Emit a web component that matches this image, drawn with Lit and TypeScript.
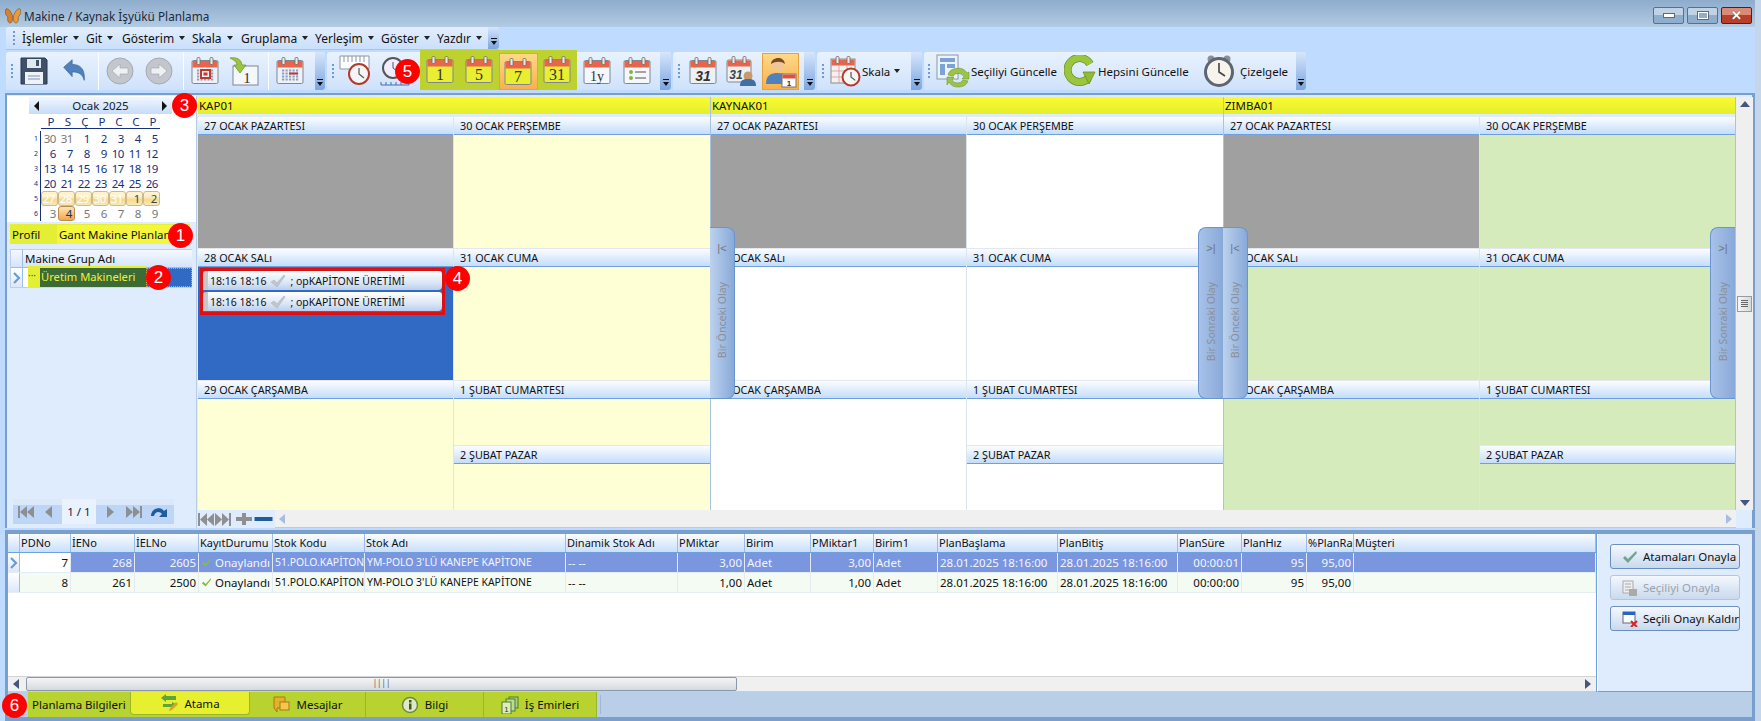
import { LitElement, html, css, svg } from "lit";
import { customElement } from "lit/decorators.js";

const ring = (x: number) => svg`<rect x=${x} y="1.5" width="3" height="7" rx="1" fill="#e8e8e8" stroke="#7a6a60" stroke-width=".8"/>`;
const cal = (body: string, inner: unknown, head = "#e8654c") => html`<svg class="ic" viewBox="0 0 30 30" width="30" height="30">
  <rect x="2" y="4.5" width="26" height="23" rx="1.5" fill=${body} stroke="#7d8794"/>
  <rect x="2.5" y="5" width="25" height="6.5" fill=${head}/>${ring(7)}${ring(20)}${inner}</svg>`;
const num = (t: string, s = 16, fam = "Liberation Serif", weight = "400", st = "normal") =>
  svg`<text x="15" y="25" text-anchor="middle" font-family=${fam} font-size=${s} font-weight=${weight} font-style=${st} fill="#333">${t}</text>`;
const dotGrid = svg`<g fill="#8d9fc0">${[0, 1, 2, 3].map(r => [0, 1, 2, 3, 4].map(c => svg`<rect x=${7 + c * 3.5} y=${13.5 + r * 3} width="2.2" height="2"/>`))}</g>`;
const clock = (cx: number, cy: number, r: number) => svg`<circle cx=${cx} cy=${cy} r=${r} fill="#f6f6f6" stroke="#b53a2e" stroke-width="2"/><path d="M${cx} ${cy - r * .6}V${cy}L${cx + r * .5} ${cy + r * .4}" stroke="#555" stroke-width="1.2" fill="none"/>`;
const ruler = svg`<path d="M1 1h29v13H1z" fill="#fff" stroke="#8a97a8"/><path d="M5 1v6M9 1v6M13 1v6M17 1v6M21 1v6M25 1v6" stroke="#8a97a8"/>`;
const icons = {
  save: html`<svg class="ic" viewBox="0 0 30 30" width="30" height="30"><path d="M2 2h24l2 2v24H2z" fill="#3f5068" stroke="#28384e"/><rect x="8" y="3" width="14" height="9" fill="#dfe7f0"/><rect x="17" y="4" width="3" height="6" fill="#3f5068"/><rect x="6" y="16" width="18" height="12" fill="#eef3f8"/><path d="M9 20h12M9 23h12" stroke="#7d93b5"/></svg>`,
  undo: html`<svg class="ic" viewBox="0 0 30 30" width="28" height="28"><path d="M4 11l9-8v5c8 0 14 4 13 17-2-7-6-9-13-9v5z" fill="#4f81bd" stroke="#3c6aa3" stroke-width=".8"/></svg>`,
  back: html`<svg class="ic" viewBox="0 0 30 30" width="30" height="30"><circle cx="15" cy="15" r="13" fill="#c3c6cc" stroke="#a5a9b0"/><path d="M7 15l8-7v4h8v6h-8v4z" fill="#eef0f3" stroke="#a0a4aa" stroke-width=".6"/></svg>`,
  fwd: html`<svg class="ic" viewBox="0 0 30 30" width="30" height="30"><circle cx="15" cy="15" r="13" fill="#c3c6cc" stroke="#a5a9b0"/><path d="M23 15l-8-7v4H7v6h8v4z" fill="#eef0f3" stroke="#a0a4aa" stroke-width=".6"/></svg>`,
  cal1: cal("#eef2f8", svg`${dotGrid}<rect x="11" y="14" width="9" height="8" fill="#eef2f8" stroke="#c0392b" stroke-width="2"/><rect x="13.500" y="16.500" width="4" height="3" fill="#c0392b"/>`),
  goto1: html`<svg class="ic" viewBox="0 0 30 30" width="30" height="30"><rect x="4" y="10" width="25" height="19" fill="#f4f7fb" stroke="#7d8794"/><path d="M1 2c7-1 11 1 12 7h4l-6 8-6-8h3c0-3-3-5-7-7z" fill="#9bc53d" stroke="#6b8f22" stroke-width=".7"/><text x="18" y="27" font-family="Liberation Serif" font-size="15" text-anchor="middle" fill="#333">1</text></svg>`,
  cal2: cal("#eef2f8", svg`${dotGrid}<rect x="14" y="16.5" width="9" height="2" fill="#c0392b"/>`),
  rclock: html`<svg class="ic" viewBox="0 0 32 32" width="32" height="32">${ruler}${clock(20, 19, 10)}</svg>`,
  sclock: html`<svg class="ic" viewBox="0 0 32 32" width="32" height="32"><circle cx="13" cy="13" r="10" fill="#eef" stroke="#555" stroke-width="2"/><path d="M13 7v6l4 3" stroke="#555" fill="none"/><path d="M1 27v3h28v-3M6 27v3M11 27v3M16 27v3M21 27v3" stroke="#3e6fb0" fill="none"/></svg>`,
  y1: cal("#e9ef30", num("1")),
  y5: cal("#e9ef30", num("5")),
  y7: cal("#e9ef30", num("7")),
  y31: cal("#e9ef30", num("31")),
  yy: cal("#f4f7fb", num("1y", 14)),
  list: cal("#f4f7fb", svg`<circle cx="9" cy="16" r="2" fill="#8ab33c"/><circle cx="9" cy="22" r="2" fill="#8ab33c"/><path d="M13 16h11M13 22h11" stroke="#555" stroke-width="1.2"/>`),
  c31: cal("#eef1f4", num("31", 14, "Liberation Sans", "700", "italic")),
  c31t: html`<svg class="ic" viewBox="0 0 32 32" width="32" height="32"><rect x="2" y="5" width="24" height="22" rx="1.5" fill="#eef1f4" stroke="#7d8794"/><rect x="2.5" y="5.5" width="23" height="6" fill="#e8654c"/>${ring(7)}${ring(18)}<text x="11" y="24" font-family="Liberation Sans" font-size="12" font-weight="700" font-style="italic" fill="#444" text-anchor="middle">31</text><circle cx="23" cy="21" r="4.5" fill="#c89a6a"/><path d="M15 31c0-6 3-7 8-7s8 1 8 7z" fill="#3f6ea8"/></svg>`,
  person: html`<svg class="ic" viewBox="0 0 32 32" width="32" height="32"><circle cx="13" cy="9" r="6.5" fill="#f1c596"/><path d="M6 8c0-7 13-9 14 0-4-3-9-3-14 0z" fill="#7a4a22"/><path d="M1 28c0-9 5-11 12-11s9 3 9 5v6z" fill="#4f81bd"/><rect x="17" y="18" width="14" height="13" fill="#fff" stroke="#777"/><rect x="17.5" y="18.5" width="13" height="4" fill="#e0503c"/><text x="24" y="30" font-family="Liberation Sans" font-size="8" font-weight="700" text-anchor="middle" fill="#333">1</text></svg>`,
  skala: html`<svg class="ic" viewBox="0 0 32 32" width="32" height="32"><rect x="2" y="4" width="24" height="24" fill="#f4f1ee" stroke="#8b8b8b"/><rect x="2.5" y="4.5" width="23" height="6" fill="#e8654c"/>${ring(7)}${ring(18)}<path d="M2 16h24M2 22h24M10 10v18M18 10v18" stroke="#d88" stroke-width=".7"/>${clock(22, 22, 8.5)}</svg>`,
  upd1: html`<svg class="ic" viewBox="0 0 34 34" width="34" height="34"><rect x="1" y="1" width="21" height="24" fill="#eef3fa" stroke="#8a97a8"/><rect x="4" y="4" width="15" height="4" fill="#7ba3d6"/><rect x="4" y="10" width="5" height="11" fill="#7ba3d6"/><rect x="11" y="10" width="8" height="4" fill="#7ba3d6"/><path d="M12 21a10 8 0 0 1 19-2l2-1v7h-7l2-2a6 5 0 0 0-11-1zM32 27a10 8 0 0 1-19 1l-2 3v-8h7l-2 3a6 5 0 0 0 11 0z" fill="#9ac34a" stroke="#6f9a2a" stroke-width=".6"/></svg>`,
  upd2: html`<svg class="ic" viewBox="0 0 32 32" width="32" height="32"><path d="M24.500 23A12 12 0 1 1 26 9" fill="none" stroke="#6b8f22" stroke-width="8"/><path d="M24.500 23A12 12 0 1 1 26 9" fill="none" stroke="#9ac53f" stroke-width="6.500"/><path d="M19 17h12l-6 12z" fill="#8fbc35" stroke="#6b8f22" stroke-width=".8"/></svg>`,
  cizelge: html`<svg class="ic" viewBox="0 0 34 34" width="34" height="34"><circle cx="9" cy="5" r="3.500" fill="#8a8f96"/><circle cx="25" cy="5" r="3.500" fill="#8a8f96"/><circle cx="17" cy="18" r="13.500" fill="#f6f4ec" stroke="#5c6570" stroke-width="3"/><path d="M17 9v9l6 4" stroke="#444" stroke-width="1.600" fill="none"/></svg>`,
  butterfly: html`<svg viewBox="0 0 16 16" width="16" height="16"><path d="M7.500 8C6 3 3 0 1 1c-2 2 0 7 2 8-1 2 0 6 2 6s3-3 2.500-7z" fill="#d9822b" stroke="#6b3a10" stroke-width=".5"/><path d="M8.500 8c1.500-5 4.500-8 6.500-7 2 2 0 7-2 8 1 2 0 6-2 6s-3-3-2.500-7z" fill="#e79c3c" stroke="#6b3a10" stroke-width=".5"/></svg>`,
  check: html`<svg viewBox="0 0 16 14" width="16" height="14"><path d="M1 8l3-2 3 3 7-8 1 1-8 11z" fill="#c2c6cc" stroke="#a9adb3" stroke-width=".5"/></svg>`,
  ok: html`<svg viewBox="0 0 14 12" width="13" height="11"><path d="M1 7l2-2 3 3 6-7 1 1-7 9z" fill="#8dbb3a"/></svg>`,
  okBtn: html`<svg viewBox="0 0 16 14" width="16" height="14"><path d="M1 8l2-2 3 3 8-8 1 2-9 10z" fill="#6fa58c"/></svg>`,
  sel: html`<svg viewBox="0 0 16 16" width="16" height="16"><rect x="1" y="1" width="10" height="12" fill="#eee" stroke="#aaa"/><path d="M3 4h6M3 7h6M3 10h4" stroke="#aaa"/><rect x="7" y="9" width="8" height="7" fill="#aaa"/></svg>`,
  unsel: html`<svg viewBox="0 0 16 16" width="16" height="16"><rect x="1" y="1" width="12" height="11" fill="#fff" stroke="#666"/><rect x="1" y="1" width="12" height="3" fill="#2563c4"/><path d="M9 10l6 6M15 10l-6 6" stroke="#d8232a" stroke-width="2"/></svg>`,
  atama: html`<svg viewBox="0 0 18 18" width="18" height="18"><path d="M1 4l5-4v2h10v4H6v2zM17 11l-5-3v2H3v3h9v2z" fill="#5aa63a"/><path d="M9 17l1-3 6-6 2 2-6 6z" fill="#d9a22c"/></svg>`,
  msg: html`<svg viewBox="0 0 18 18" width="18" height="18"><path d="M2 1h11v11H5v4l-3-4z" fill="#e3b12c" stroke="#a87b12"/><rect x="8" y="6" width="9" height="8" fill="#f2c84c" stroke="#a87b12"/></svg>`,
  info: html`<svg viewBox="0 0 18 18" width="18" height="18"><circle cx="9" cy="9" r="7.500" fill="#dfe8c8" stroke="#6f8a3a" stroke-width="1.500"/><rect x="8" y="7.500" width="2.500" height="6" fill="#3c5a1e"/><rect x="8" y="4" width="2.500" height="2.500" fill="#3c5a1e"/></svg>`,
  orders: html`<svg viewBox="0 0 18 18" width="18" height="18"><rect x="8" y="1" width="9" height="11" fill="#a8d080" stroke="#4f7a2a"/><rect x="5" y="3" width="9" height="12" fill="#bcdc94" stroke="#4f7a2a"/><rect x="1" y="6" width="9" height="12" fill="#d8efbc" stroke="#4f7a2a"/><text x="5.500" y="16" font-family="Liberation Sans" font-size="8" text-anchor="middle" fill="#333">1</text></svg>`,
  chevR: html`<svg viewBox="0 0 8 12" width="8" height="12"><path d="M1 1l5 5-5 5" fill="none" stroke="#6b9bd8" stroke-width="2.200"/></svg>`,
};
const grip = html`<span class="grip"><i></i><i></i><i></i><i></i></span>`;
const chev = html`<span class="chev"><b></b><em></em></span>`;
const sep = html`<span class="sep"></span>`;
const gap = html`<span></span>`;
const tb = (i: unknown, c = "") => html`<span class="tb ${c}">${i}</span>`;

const weeks: [string, string[]][] = [
  ["1", ["30", "31", "1", "2", "3", "4", "5"]],
  ["2", ["6", "7", "8", "9", "10", "11", "12"]],
  ["3", ["13", "14", "15", "16", "17", "18", "19"]],
  ["4", ["20", "21", "22", "23", "24", "25", "26"]],
  ["5", ["27", "28", "29", "30", "31", "1", "2"]],
  ["6", ["3", "4", "5", "6", "7", "8", "9"]],
];
const dayClass = (w: number, i: number) => {
  if (w === 0 && i < 2) return "out";
  if (w === 4) return i < 5 ? "hl" : "hl hlo";
  if (w === 5) return i === 1 ? "sel" : "out";
  return "";
};

const cols = ["PDNo", "İENo", "İELNo", "KayıtDurumu", "Stok Kodu", "Stok Adı", "Dinamik Stok Adı", "PMiktar", "Birim", "PMiktar1", "Birim1", "PlanBaşlama", "PlanBitiş", "PlanSüre", "PlanHız", "%PlanRa", "Müşteri"];
const rows = [
  ["7", "268", "2605", "Onaylandı", "51.POLO.KAPİTONE", "YM-POLO 3'LÜ KANEPE KAPİTONE", "-- --", "3,00", "Adet", "3,00", "Adet", "28.01.2025 18:16:00", "28.01.2025 18:16:00", "00:00:01", "95", "95,00", ""],
  ["8", "261", "2500", "Onaylandı", "51.POLO.KAPİTONE", "YM-POLO 3'LÜ KANEPE KAPİTONE", "-- --", "1,00", "Adet", "1,00", "Adet", "28.01.2025 18:16:00", "28.01.2025 18:16:00", "00:00:00", "95", "95,00", ""],
];
const rightCols = new Set([0, 1, 2, 7, 9, 13, 14, 15]);
const tightCols = new Set([4, 5]);
const cellClass = (i: number) => `${rightCols.has(i) ? "rgt" : ""} ${tightCols.has(i) ? "tight" : ""}`;

const resources = [
  { name: "KAP01", a: "cream", ev: true, prev: false, next: false },
  { name: "KAYNAK01", a: "white", ev: false, prev: true, next: true },
  { name: "ZIMBA01", a: "green", ev: false, prev: true, next: true },
];

@customElement("app-root")
export class AppRoot extends LitElement {
  static styles = css`
    :host { display: block; position: relative; width: 1761px; height: 721px; overflow: hidden; background: #c4d6ea; font-family: "Noto Sans", "DejaVu Sans", sans-serif; font-size: 11px; color: #111; }
    .win { width: 1755px; height: 721px; background: #bfdbff; display: flex; flex-direction: column; }
    .title { height: 27px; flex: none; box-sizing: border-box; padding: 4px 0 0 5px; background: linear-gradient(#8eaccc, #b3cbe3); display: flex; align-items: center; gap: 3px; font-size: 11.8px; color: #1d2a3a; }
    .title .spacer { flex: 1; }
    .wbtns { display: flex; gap: 3px; padding-right: 3px; }
    .wb { width: 31px; height: 17px; box-sizing: border-box; border: 1px solid #5b6f8a; border-radius: 2px; background: linear-gradient(#c0d2e6 50%, #8fadcc 50%); display: flex; align-items: center; justify-content: center; }
    .wb.min i { width: 10px; height: 3px; background: #fff; border: 1px solid #667; }
    .wb.max i { width: 8px; height: 5px; border: 2px solid #fff; outline: 1px solid #667; outline-offset: -1px; background: #8fadcc; }
    .wb.close { background: linear-gradient(#dc8a78 50%, #b8402a 50%); border-color: #5c1a1a; color: #fff; font: 700 13px/1 "Liberation Sans", sans-serif; text-shadow: 0 0 1px #333; }

    .menurow { height: 25px; flex: none; display: flex; padding-left: 6px; }
    .menu { width: 493px; height: 23px; display: grid; grid-template-columns: 16px 64px 36px 70px 49px 74px 66px 56px 51px 11px; align-items: center; background: linear-gradient(#e3eefd, #c9dffb); border-bottom: 1px solid #a9c6ea; border-radius: 3px 3px 0 0; box-sizing: border-box; font-size: 12px; }
    .mi { display: inline-flex; align-items: center; gap: 5px; }
    .mi::after { content: ""; border: 3px solid transparent; border-top: 4px solid #222; margin-top: 3px; }
    .grip { display: flex; flex-direction: column; gap: 2px; width: 100%; align-items: center; justify-content: center; height: 100%; }
    .grip i { width: 2px; height: 2px; background: #6e9bd6; }
    .chev { height: 100%; width: 100%; background: linear-gradient(#d6e6fb, #7ba6e0); display: flex; flex-direction: column; align-items: center; justify-content: flex-end; padding-bottom: 4px; box-sizing: border-box; border-radius: 0 3px 3px 0; }
    .chev b { width: 6px; height: 1px; background: #111; margin-bottom: 2px; }
    .chev em { border: 3px solid transparent; border-top: 4px solid #111; border-bottom: 0; }

    .toolrow { height: 38px; flex: none; display: flex; padding-left: 6px; gap: 2px; }
    .grp { height: 38px; display: grid; align-items: stretch; background: linear-gradient(#e9f2fe, #cfe2fb); border-radius: 3px 3px 0 0; }
    .ga { width: 319px; grid-template-columns: 12px 32px 48px 2px 40px 38px 5px 2px 40px 38px 5px 2px 40px 5px 10px; }
    .gb { width: 344px; grid-template-columns: 11px 34px 48px 157px 40px 39px 4px 11px; }
    .gc { width: 142px; grid-template-columns: 12px 35px 42px 37px 5px 11px; }
    .gd { width: 105px; grid-template-columns: 11px 34px 43px 6px 11px; }
    .ge { width: 382px; grid-template-columns: 10px 37px 91px 36px 95px 5px 42px 56px 10px; }
    .tb { display: flex; align-items: center; justify-content: center; }
    .tb.on { background: linear-gradient(#ffd98a, #f8b04a); outline: 1px solid #e8a23a; outline-offset: -1px; margin-top: 1px; }
    .yel .tb.on { margin-top: 3px; }
    .tb.txt { font-size: 11.5px; justify-content: flex-start; white-space: nowrap; gap: 4px; }
    .tb.drop::after { content: ""; border: 3px solid transparent; border-top: 4px solid #222; margin-top: 3px; }
    .sep { background: linear-gradient(#f8fbff, #ffffff); width: 1px; }
    .yel { display: grid; grid-template-columns: repeat(4, 1fr); background: #bdd22f; margin-top: -2px; height: 40px; }
    .ic { display: block; }

    .main { height: 435px; flex: none; margin: 3px 0 0 5px; border: 2px solid #7a9fce; border-width: 2px 3px 0 2px; display: flex; box-sizing: border-box; background: #dfecfd; }
    .left { width: 189px; flex: none; display: flex; flex-direction: column; border-right: 1px solid #b8cce6; margin-top: 1px; }
    .calbox { height: 126px; flex: none; background: #fff; box-sizing: border-box; padding: 1px 0 0 22px; }
    .calhead { width: 143px; height: 17px; background: linear-gradient(#f1f7ff, #c6dcf8); display: flex; align-items: center; justify-content: space-between; padding: 0 5px; box-sizing: border-box; font-size: 11.5px; color: #123; }
    .arr { border: 4px solid transparent; border-width: 5px 5px; }
    .arr.l { border-right-color: #111; border-left: 0; }
    .arr.r { border-left-color: #111; border-right: 0; }
    .calgrid { display: grid; grid-template-columns: 13px repeat(7, 17px); grid-template-rows: 17px repeat(6, 15px); margin-left: -1px; color: #15317e; font-size: 11.5px; line-height: 15px; letter-spacing: -0.4px; }
    .calgrid > span { text-align: right; padding-right: 2px; box-sizing: border-box; }
    .calgrid .dn { height: 15px; border-bottom: 1px solid #15317e; text-align: center; padding: 0 0 0 3px; letter-spacing: 0; }
    .calgrid .wk { font-size: 7px; color: #15317e; border-right: 1px solid #15317e; padding-right: 2px; letter-spacing: 0; }
    .calgrid .wk0 { padding: 0; }
    .out { color: #777; }
    .hl { background: linear-gradient(#fff3cf 30%, #f5d98e 60%, #fbeab8); border: 1px solid #cdb98a; border-radius: 3px; color: #fff; line-height: 13px; }
    .hlo { color: #444; }
    .sel { background: linear-gradient(#fde4b0, #f4a64a); border: 1px solid #b98d52; border-radius: 3px; line-height: 13px; }

    .prof { margin: 2px 6px 0 3px; height: 20px; background: #e3ee35; display: flex; align-items: center; padding-left: 2px; font-size: 11.5px; flex: none; }
    .prof .lb1 { width: 45px; flex: none; }
    .prof .v { flex: 1; height: 19px; background: #f3f63c; white-space: nowrap; overflow: hidden; padding-left: 2px; line-height: 19px; }
    .tree { margin: 5px 0 0 3px; flex: none; background: #fff; border: 1px solid #bcd0ea; border-right: 0; width: 182px; box-sizing: border-box; }
    .trh { display: grid; grid-template-columns: 12px 1fr; height: 18px; background: linear-gradient(#f5f9ff, #d3e4fb); border-bottom: 1px solid #9dbce6; box-sizing: border-box; line-height: 18px; font-size: 11.5px; }
    .trh span:first-child { border-right: 1px solid #9dbce6; }
    .trh span:last-child { padding-left: 2px; }
    .trr { display: grid; grid-template-columns: 12px 5px 12px 106px 1fr; height: 19px; line-height: 18px; }
    .trr .s { background: linear-gradient(#fff, #dce8f8); border-right: 1px solid #9dbce6; padding-left: 2px; box-sizing: border-box; display: flex; align-items: center; }
    .trr .y { background: #e3ee35; color: #555; font-size: 10px; line-height: 14px; box-shadow: 0 -2px 0 #e3ee35, 0 1px 0 #e3ee35; }
    .trr .d { background: #3d6b35; color: #eef23a; white-space: nowrap; font-size: 11.2px; box-shadow: 0 -2px 0 #e3ee35, 0 1px 0 #e3ee35; padding-left: 1px; }
    .trr .bl { background: #316ac5; border: 1px dotted #d8a84a; box-sizing: border-box; }
    .lspace { flex: 1; }
    .pager { display: grid; grid-template-columns: 49px 34px 78px; margin: 0 0 4px 6px; height: 25px; flex: none; align-items: stretch; }
    .pg { background: linear-gradient(#dbe8fa 25%, #bdd6f7 25%); display: flex; align-items: center; justify-content: space-around; padding: 0 2px; }
    .pgt { display: flex; align-items: center; justify-content: center; background: #eaf2fe; font-size: 11.5px; color: #123; }
    .navic { display: block; }

    .rt { width: 1555px; flex: none; display: flex; flex-direction: column; margin-left: 1px; padding-top: 2px; box-sizing: border-box; position: relative; }
    .rtop { display: flex; height: 413px; flex: none; }
    .sched { width: 1538px; flex: none; display: grid; grid-template-columns: 513px 513px 512px; position: relative; }
    .res { display: flex; flex-direction: column; position: relative; border-right: 1px solid #a9c3e6; box-sizing: border-box; }
    .rh { height: 17px; flex: none; background: linear-gradient(#fbfb2e, #e3ee2e); font-size: 11.5px; line-height: 17px; padding-left: 1px; }
    .rgap { height: 3px; flex: none; background: #dfecfd; }
    .rb { flex: 1; display: grid; grid-template-columns: 255px 1fr; min-height: 0; }
    .col { display: flex; flex-direction: column; min-width: 0; }
    .col + .col { border-left: 1px solid #dce4ee; }
    .day { display: flex; flex-direction: column; border-top: 1px solid #e4e8ee; box-sizing: border-box; }
    .d1 { height: 131px; border-top: 0; }
    .d2 { height: 132px; }
    .d3 { height: 130px; }
    .d4 { height: 65px; }
    .d5 { height: 65px; }
    .dh { height: 18px; flex: none; background: linear-gradient(#fbfdff, #c4ddfb); border-bottom: 1px solid #6f9fdc; box-sizing: border-box; padding-left: 6px; line-height: 18px; font-size: 10.8px; white-space: nowrap; }
    .dc { flex: 1; }
    .gray { background: #a0a0a0; }
    .cream { background: #ffffd6; }
    .white { background: #fff; }
    .green { background: #d6ebbb; }
    .blue { background: #316ac5; }
    .evs { margin: 1px 8px 0 2px; border: 3px solid #e00f12; display: flex; flex-direction: column; gap: 2px; padding-bottom: 1px; box-sizing: border-box; background: #316ac5; }
    .ev { height: 19px; box-sizing: border-box; background: linear-gradient(#fff, #dbe7f7 60%, #b9cfee); border-left: 5px solid #c8c8c8; border-radius: 3px 3px 4px 0; display: flex; align-items: center; padding-left: 2px; gap: 4px; white-space: nowrap; font-size: 10.5px; }
    .tab { position: absolute; top: 130px; height: 172px; width: 25px; box-sizing: border-box; background: linear-gradient(90deg, #bcd2ee, #88a9d8); border: 1px solid #6b95d0; color: #8a8f96; display: flex; flex-direction: column; align-items: center; font-size: 10.6px; padding-top: 15px; gap: 28px; }
    .tab span.t { writing-mode: vertical-rl; transform: rotate(180deg); white-space: nowrap; }
    .tab.p { left: -1px; border-left: 0; border-radius: 0 8px 8px 0; }
    .tab.n { right: 0; border-right: 0; border-radius: 8px 0 0 8px; background: linear-gradient(90deg, #a8c2e8, #88a9d8); }
    .tab b { font: 400 11px/1 "Liberation Sans", sans-serif; color: #70757c; }

    .vs { width: 17px; flex: none; background: #efeff0; display: flex; flex-direction: column; align-items: center; justify-content: space-between; padding: 4px 0; box-sizing: border-box; }
    .up { border: 5px solid transparent; border-bottom: 6px solid #46557c; border-top: 0; }
    .dn2 { border: 5px solid transparent; border-top: 6px solid #46557c; border-bottom: 0; }
    .thumb { width: 15px; height: 16px; box-sizing: border-box; background: linear-gradient(90deg, #f6f6f6, #d8d8d8); border: 1px solid #9a9aa0; display: flex; flex-direction: column; gap: 1px; align-items: center; justify-content: center; }
    .thumb i { width: 7px; height: 1px; background: #666; }
    .hs { height: 18px; flex: none; display: flex; align-items: stretch; }
    .navs { width: 77px; flex: none; display: flex; align-items: center; background: #dfecfd; gap: 1px; }
    .htrack { width: 1461px; flex: none; background: #f0f0f0; display: flex; align-items: center; justify-content: space-between; padding: 0 4px; box-sizing: border-box; border-bottom: 1px solid #c9c9c9; }
    .la { border: 5px solid transparent; border-right: 6px solid #a7bde0; border-left: 0; }
    .ra { border: 5px solid transparent; border-left: 6px solid #a7bde0; border-right: 0; }

    .bot { height: 158px; flex: none; margin: 2px 0 0 5px; border-top: 4px solid #7a9fce; border-left: 3px solid #7a9fce; border-right: 3px solid #7a9fce; display: flex; background: #dfecfd; }
    .gridb { width: 1589px; flex: none; background: #fff; display: flex; flex-direction: column; border-right: 1px solid #6f9fdc; box-sizing: border-box; }
    .grow { display: grid; grid-template-columns: 12px 51px 64px 64px 74px 92px 201px 112px 67px 66px 63px 64px 120px 120px 64px 65px 47px 1fr; }
    .gh { height: 19px; flex: none; background: linear-gradient(#fbfdff, #c8dffb); border-bottom: 1px solid #6f9fdc; box-sizing: border-box; line-height: 18px; }
    .gh span { border-right: 1px solid #9dbce6; padding-left: 1px; white-space: nowrap; overflow: hidden; font-size: 11px; }
    .gr { height: 20px; flex: none; border-bottom: 1px solid #e4ecf6; box-sizing: border-box; line-height: 19px; }
    .gr span { border-right: 1px solid #e2eaf4; padding: 0 2px; white-space: nowrap; overflow: hidden; display: flex; align-items: center; gap: 3px; font-size: 11.5px; }
    .gr span.rgt { justify-content: flex-end; }
    .gr span.tight { font-size: 10.4px; }
    .gr .gs { background: linear-gradient(#fff, #dce8f8); border-right: 1px solid #9dbce6; padding: 0 0 0 2px; }
    .gr.act { background: #7a96df; color: #f2f5ff; }
    .gr.act span:nth-child(2) { background: #fff; color: #111; }
    .gr.alt { background: #f4fbf3; }
    .gsp { flex: 1; }
    .gsb { height: 14px; flex: none; display: flex; align-items: center; background: #f0f0f0; border-top: 1px solid #d4d4d4; border-bottom: 1px solid #c5cedb; }
    .lb { border: 5px solid transparent; border-right: 6px solid #46557c; border-left: 0; margin: 0 7px 0 5px; }
    .rb2 { border: 5px solid transparent; border-left: 6px solid #46557c; border-right: 0; margin-right: 5px; }
    .sthumb { width: 711px; height: 14px; box-sizing: border-box; background: linear-gradient(#f5f5f7, #d6d9de); border: 1px solid #8a98ac; border-radius: 2px; text-align: center; line-height: 10px; font-size: 8px; color: #555; }
    .btns { flex: 1; border-left: 1px solid #fff; padding: 10px 15px 0 12px; display: flex; flex-direction: column; gap: 6px; border-bottom: 1px solid #6f9fdc; box-sizing: border-box; }
    .btn { height: 25px; box-sizing: border-box; border: 1px solid #6a8fbf; border-radius: 3px; background: linear-gradient(#f4f8fd, #dce7f5 55%, #c9d9ee); display: flex; align-items: center; padding-left: 11px; gap: 5px; font-size: 11.5px; white-space: nowrap; }
    .btn.dis { color: #9aa3ae; border-color: #b4c6dd; }

    .tabs { height: 25px; flex: none; display: flex; align-items: stretch; margin: 0 0 0 5px; padding-left: 20px; background: #b9cfe8; border-bottom: 4px solid #7a9fce; font-size: 11.5px; border-left: 3px solid #7a9fce; border-right: 3px solid #7a9fce; }
    .tabs .yw { display: grid; grid-template-columns: 102px 120px 116px 118px 113px; width: 569px; background: #b8d22f; align-items: stretch; }
    .tl { display: flex; align-items: center; justify-content: center; gap: 6px; border-right: 1px solid #9cb52a; white-space: nowrap; }
    .tl.plain { justify-content: flex-start; padding-left: 4px; border-right: 0; }
    .tl.act { background: #e8ef2f; border-radius: 0 0 4px 4px; border: 1px solid #9cb52a; border-top: 0; margin-bottom: 2px; }
    .tabs .fin { width: 1px; background: #9fb6d4; margin: 3px 0 3px 3px; }

    .num { position: absolute; width: 25px; height: 25px; border-radius: 50%; background: #f00; color: #fff; font: 400 17px/25px "Liberation Sans", sans-serif; text-align: center; }
    .n1 { left: 168px; top: 223px; }
    .n2 { left: 146px; top: 265px; }
    .n3 { left: 172px; top: 93px; }
    .n4 { left: 445px; top: 266px; }
    .n5 { left: 395px; top: 59px; }
    .n6 { left: 2px; top: 693px; }
  `;

  private nav(d: string, c = "#8d8f90", w = 18) {
    return html`<svg class="navic" viewBox="0 0 18 14" width=${w} height="14"><path d=${d} fill=${c}/></svg>`;
  }

  private dayCell(label: string, size: string, cls: string, ev = false) {
    return html`<div class="day ${size}"><div class="dh">${label}</div><div class="dc ${cls}">
      ${ev ? html`<div class="evs">${[0, 1].map(() => html`<div class="ev">18:16 18:16 ${icons.check} ; opKAPİTONE ÜRETİMİ</div>`)}</div>` : ""}
    </div></div>`;
  }

  private resource(r: typeof resources[number]) {
    return html`<div class="res">
      <div class="rh">${r.name}</div><div class="rgap"></div>
      <div class="rb">
        <div class="col">
          ${this.dayCell("27 OCAK PAZARTESI", "d1", "gray")}
          ${this.dayCell("28 OCAK SALı", "d2", r.ev ? "blue" : r.a, r.ev)}
          ${this.dayCell("29 OCAK ÇARŞAMBA", "d3", r.a)}
        </div>
        <div class="col">
          ${this.dayCell("30 OCAK PERŞEMBE", "d1", r.a)}
          ${this.dayCell("31 OCAK CUMA", "d2", r.a)}
          ${this.dayCell("1 ŞUBAT CUMARTESI", "d4", r.a)}
          ${this.dayCell("2 ŞUBAT PAZAR", "d5", r.a)}
        </div>
      </div>
      ${r.prev ? html`<div class="tab p"><b>|&lt;</b><span class="t">Bir Önceki Olay</span></div>` : ""}
      ${r.next ? html`<div class="tab n"><b>&gt;|</b><span class="t">Bir Sonraki Olay</span></div>` : ""}
    </div>`;
  }

  render() {
    const first = "M1 1h2v12H1zM10 1v12L3 7zM17 1v12l-7-6z";
    const last = "M17 1h-2v12h2zM8 1v12l7-6zM1 1v12l7-6z";
    return html`<div class="win">
      <div class="title">${icons.butterfly}<span>Makine / Kaynak İşyükü Planlama</span><span class="spacer"></span>
        <div class="wbtns"><div class="wb min"><i></i></div><div class="wb max"><i></i></div><div class="wb close">✕</div></div>
      </div>
      <div class="menurow"><div class="menu">${grip}
        ${["İşlemler", "Git", "Gösterim", "Skala", "Gruplama", "Yerleşim", "Göster", "Yazdır"].map(m => html`<span class="mi">${m}</span>`)}${chev}
      </div></div>
      <div class="toolrow">
        <div class="grp ga">${grip}${tb(icons.save)}${tb(icons.undo)}${sep}${tb(icons.back)}${tb(icons.fwd)}${gap}${sep}${tb(icons.cal1)}${tb(icons.goto1)}${gap}${sep}${tb(icons.cal2)}${gap}${chev}</div>
        <div class="grp gb">${grip}${tb(icons.rclock)}${tb(icons.sclock)}
          <div class="yel">${tb(icons.y1)}${tb(icons.y5)}${tb(icons.y7, "on")}${tb(icons.y31)}</div>
          ${tb(icons.yy)}${tb(icons.list)}${gap}${chev}</div>
        <div class="grp gc">${grip}${tb(icons.c31)}${tb(icons.c31t)}${tb(icons.person, "on")}${gap}${chev}</div>
        <div class="grp gd">${grip}${tb(icons.skala)}${tb("Skala", "txt drop")}${gap}${chev}</div>
        <div class="grp ge">${grip}${tb(icons.upd1)}${tb("Seçiliyi Güncelle", "txt")}${tb(icons.upd2)}${tb("Hepsini Güncelle", "txt")}${gap}${tb(icons.cizelge)}${tb("Çizelgele", "txt")}${chev}</div>
      </div>
      <div class="main">
        <div class="left">
          <div class="calbox">
            <div class="calhead"><i class="arr l"></i>Ocak 2025<i class="arr r"></i></div>
            <div class="calgrid">
              <span class="wk0"></span>${["P", "S", "Ç", "P", "C", "C", "P"].map(d => html`<span class="dn">${d}</span>`)}
              ${weeks.map(([n, ds], w) => html`<span class="wk">${n}</span>${ds.map((d, i) => html`<span class=${dayClass(w, i)}>${d}</span>`)}`)}
            </div>
          </div>
          <div class="prof"><span class="lb1">Profil</span><span class="v">Gant Makine Planlama Profili</span></div>
          <div class="tree">
            <div class="trh"><span></span><span>Makine Grup Adı</span></div>
            <div class="trr"><span class="s">${icons.chevR}</span><span></span><span class="y">···</span><span class="d">Üretim Makineleri</span><span class="bl"></span></div>
          </div>
          <div class="lspace"></div>
          <div class="pager">
            <div class="pg">${this.nav(first)}${this.nav("M12 1v12L5 7z")}</div>
            <div class="pgt">1 / 1</div>
            <div class="pg">${this.nav("M6 1v12l7-6z")}${this.nav(last)}${this.nav("M1 11C1 3 11 1 14 6l3-2v8h-8l3-3C10 6 5 6 4 11z", "#1f5c9e", 20)}</div>
          </div>
        </div>
        <div class="rt">
          <div class="rtop">
            <div class="sched">${resources.map(r => this.resource(r))}</div>
            <div class="vs"><i class="up"></i><div class="thumb"><i></i><i></i><i></i><i></i></div><i class="dn2"></i></div>
          </div>
          <div class="hs">
            <div class="navs"><svg class="navic" viewBox="0 0 36 15" width="36" height="15"><path d="M0 1h2v13H0zM2 7.500L9 1v13zM9 7.500L16 1v13zM17 1v13l7-6.500zM24 1v13l7-6.500zM31 1h2v13h-2z" fill="#8d8f90"/></svg>${this.nav("M7 1h4v4h6v4h-6v4H7V9H1V5h6z", "#8d8f90", 18)}${this.nav("M0 5h18v4H0z", "#1f5c9e", 19)}</div>
            <div class="htrack"><i class="la"></i><i class="ra"></i></div>
          </div>
        </div>
      </div>
      <div class="bot">
        <div class="gridb">
          <div class="grow gh"><span></span>${cols.map(c => html`<span>${c}</span>`)}</div>
          ${rows.map((r, ri) => html`<div class="grow gr ${ri === 0 ? "act" : "alt"}"><span class="gs">${ri === 0 ? icons.chevR : ""}</span>${r.map((v, i) => html`<span class=${cellClass(i)}>${i === 3 ? icons.ok : ""}${v}</span>`)}</div>`)}
          <div class="gsp"></div>
          <div class="gsb"><i class="lb"></i><div class="sthumb">||||</div><span class="gsp"></span><i class="rb2"></i></div>
        </div>
        <div class="btns">
          <div class="btn">${icons.okBtn}Atamaları Onayla</div>
          <div class="btn dis">${icons.sel}Seçiliyi Onayla</div>
          <div class="btn">${icons.unsel}Seçili Onayı Kaldır</div>
        </div>
      </div>
      <div class="tabs">
        <div class="yw">
          <span class="tl plain">Planlama Bilgileri</span>
          <span class="tl act">${icons.atama}Atama</span>
          <span class="tl">${icons.msg}Mesajlar</span>
          <span class="tl">${icons.info}Bilgi</span>
          <span class="tl">${icons.orders}İş Emirleri</span>
        </div>
        <span class="fin"></span>
      </div>
    </div>
    <span class="num n1">1</span><span class="num n2">2</span><span class="num n3">3</span><span class="num n4">4</span><span class="num n5">5</span><span class="num n6">6</span>`;
  }
}
